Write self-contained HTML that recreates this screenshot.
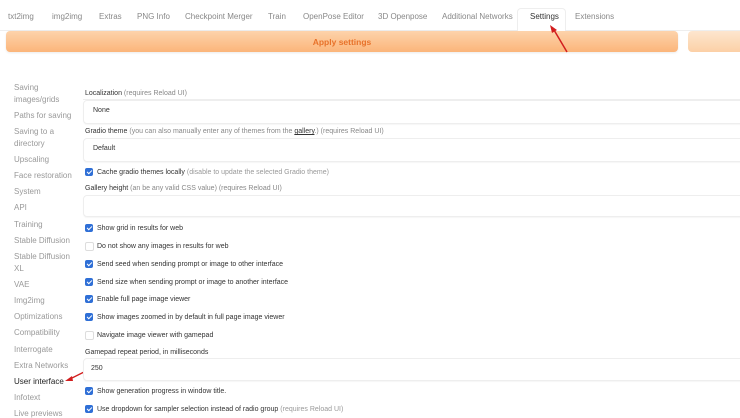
<!DOCTYPE html>
<html><head><style>
body{margin:0;width:740px;height:413px;overflow:hidden;background:#fff;font-family:"Liberation Sans",sans-serif;position:relative}
.a{position:absolute;white-space:nowrap}
.tab{font-size:8px;color:#888;top:12px}
.sb{font-size:8px;color:#999;left:14px}
.lb{font-size:7px;color:#333;left:85px}
.lb span{color:#888}
.box{position:absolute;left:83px;right:-6px;border:1px solid #eee;border-radius:4px;background:#fff;box-shadow:0 1px 1px rgba(0,0,0,.04)}
.bt{font-size:7px;color:#333;left:93px}
.cb{position:absolute;left:85px;width:8px;height:8px;border-radius:2px;background:#2f6fd6}
.cb:after{content:"";position:absolute;left:2.5px;top:1px;width:2px;height:4px;border:solid #fff;border-width:0 1.3px 1.3px 0;transform:rotate(45deg)}
.cb.off{background:#fff;border:1px solid #ddd;width:7px;height:7px}
.cb.off:after{display:none}
.ct{font-size:7px;color:#333;left:97px}
.ct span{color:#999}
</style></head><body>
<div class="a" style="left:0;right:0;top:30px;border-top:1px solid #eee"></div>
<div class="a" style="left:517px;top:8px;width:47px;height:23px;border:1px solid #eee;border-bottom:1px solid #fff;border-radius:4px 4px 0 0;background:#fff"></div>
<div class="a tab" style="left:8px">txt2img</div>
<div class="a tab" style="left:52px">img2img</div>
<div class="a tab" style="left:99px">Extras</div>
<div class="a tab" style="left:137px">PNG Info</div>
<div class="a tab" style="left:185px">Checkpoint Merger</div>
<div class="a tab" style="left:268px">Train</div>
<div class="a tab" style="left:303px">OpenPose Editor</div>
<div class="a tab" style="left:378px">3D Openpose</div>
<div class="a tab" style="left:442px">Additional Networks</div>
<div class="a tab" style="left:530px;color:#333">Settings</div>
<div class="a tab" style="left:575px">Extensions</div>
<div class="a" style="left:6px;top:31px;width:672px;height:21px;border-radius:4px;background:linear-gradient(180deg,#fdd3ab,#fbb57a);box-shadow:0 1px 2px rgba(0,0,0,.08)"></div>
<div class="a" style="left:6px;top:37px;width:672px;text-align:center;font-size:8.5px;font-weight:bold;color:#e8722a">Apply settings</div>
<div class="a" style="left:688px;top:31px;width:60px;height:21px;border-radius:4px;background:linear-gradient(180deg,#fde6cf,#fcd0a6)"></div>
<svg class="a" style="left:540px;top:22px" width="30" height="32"><line x1="27" y1="30" x2="14" y2="8" stroke="#d21e1e" stroke-width="1.5"/><path d="M10 3 L17 8 L12 11 Z" fill="#d21e1e"/></svg>
<div class="a" style="left:83px;top:99px;right:0;border-top:1px solid #eee"></div>
<div class="a sb" style="top:83px">Saving</div>
<div class="a sb" style="top:95px">images/grids</div>
<div class="a sb" style="top:111px">Paths for saving</div>
<div class="a sb" style="top:127px">Saving to a</div>
<div class="a sb" style="top:139px">directory</div>
<div class="a sb" style="top:155px">Upscaling</div>
<div class="a sb" style="top:171px">Face restoration</div>
<div class="a sb" style="top:187px">System</div>
<div class="a sb" style="top:203px">API</div>
<div class="a sb" style="top:220px">Training</div>
<div class="a sb" style="top:236px">Stable Diffusion</div>
<div class="a sb" style="top:252px">Stable Diffusion</div>
<div class="a sb" style="top:264px">XL</div>
<div class="a sb" style="top:280px">VAE</div>
<div class="a sb" style="top:296px">Img2img</div>
<div class="a sb" style="top:312px">Optimizations</div>
<div class="a sb" style="top:328px">Compatibility</div>
<div class="a sb" style="top:345px">Interrogate</div>
<div class="a sb" style="top:361px">Extra Networks</div>
<div class="a sb" style="top:377px;color:#222">User interface</div>
<div class="a sb" style="top:393px">Infotext</div>
<div class="a sb" style="top:409px">Live previews</div>
<svg class="a" style="left:62px;top:368px" width="28" height="16"><line x1="26" y1="2" x2="8" y2="11" stroke="#d21e1e" stroke-width="1.3"/><path d="M3 13 L10 8 L11 13 Z" fill="#d21e1e"/></svg>

<div class="a lb" style="top:90px">Localization <span>(requires Reload UI)</span></div>
<div class="box" style="top:100px;height:22px"></div>
<div class="a bt" style="top:107px">None</div>
<div class="a lb" style="top:128px">Gradio theme <span>(you can also manually enter any of themes from the <u style="color:#333">gallery</u>.) (requires Reload UI)</span></div>
<div class="box" style="top:138px;height:22px"></div>
<div class="a bt" style="top:145px">Default</div>
<div class="cb" style="top:168px"></div><div class="a ct" style="top:169px">Cache gradio themes locally <span>(disable to update the selected Gradio theme)</span></div>
<div class="a lb" style="top:185px">Gallery height <span>(an be any valid CSS value) (requires Reload UI)</span></div>
<div class="box" style="top:195px;height:20px"></div>
<div class="cb" style="top:224px"></div><div class="a ct" style="top:225px">Show grid in results for web</div>
<div class="cb off" style="top:242px"></div><div class="a ct" style="top:243px">Do not show any images in results for web</div>
<div class="cb" style="top:260px"></div><div class="a ct" style="top:261px">Send seed when sending prompt or image to other interface</div>
<div class="cb" style="top:278px"></div><div class="a ct" style="top:279px">Send size when sending prompt or image to another interface</div>
<div class="cb" style="top:295px"></div><div class="a ct" style="top:296px">Enable full page image viewer</div>
<div class="cb" style="top:313px"></div><div class="a ct" style="top:314px">Show images zoomed in by default in full page image viewer</div>
<div class="cb off" style="top:331px"></div><div class="a ct" style="top:332px">Navigate image viewer with gamepad</div>
<div class="a lb" style="top:349px">Gamepad repeat period, in milliseconds</div>
<div class="box" style="top:358px;height:21px"></div>
<div class="a ct" style="top:365px;left:91px">250</div>
<div class="cb" style="top:387px"></div><div class="a ct" style="top:388px">Show generation progress in window title.</div>
<div class="cb" style="top:405px"></div><div class="a ct" style="top:406px">Use dropdown for sampler selection instead of radio group <span>(requires Reload UI)</span></div>
</body></html>
